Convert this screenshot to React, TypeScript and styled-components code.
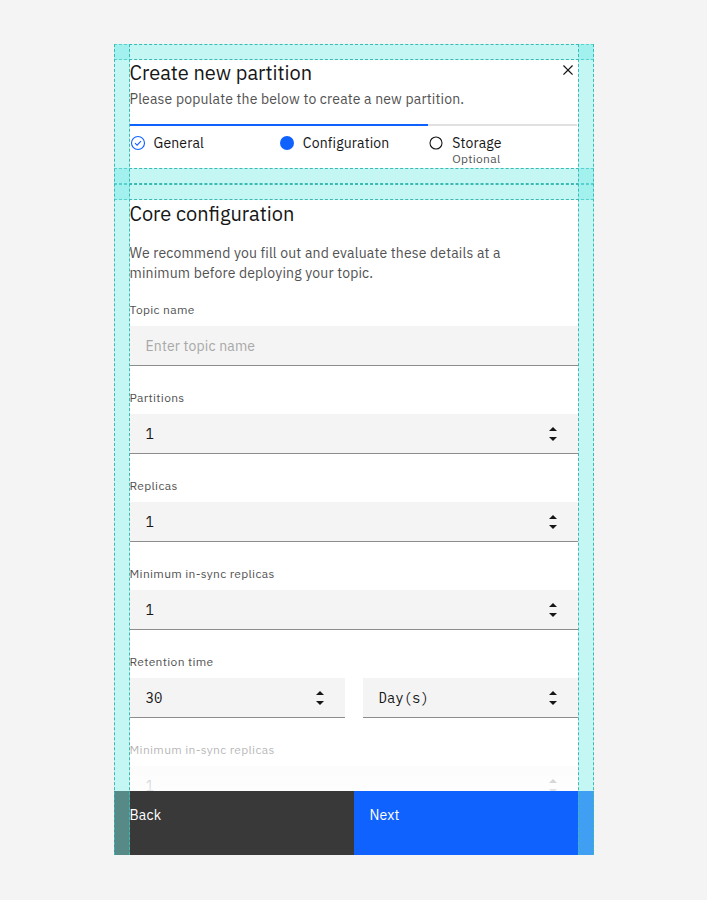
import React from 'react';
import styled, {createGlobalStyle} from "styled-components";

const GlobalStyle = createGlobalStyle`
  * {
    box-sizing: border-box;
  }
  body {
    margin: 0;
    background: #f4f4f4;
    font-family: "IBM Plex Sans", Roboto, "Noto Sans", sans-serif;
    color: #161616;
  }
`

const SpinIcon = () => (
    <svg width="8" height="14" viewBox="0 0 8 14">
        <path d="M0 4 L4 0 L8 4 Z" fill="#161616"/>
        <path d="M0 10 L8 10 L4 14 Z" fill="#161616"/>
    </svg>
)

const CloseIcon = () => (
    <svg width="20" height="20" viewBox="0 0 32 32">
        <path fill="#161616"
              d="M24 9.4L22.6 8 16 14.6 9.4 8 8 9.4 14.6 16 8 22.6 9.4 24 16 17.4 22.6 24 24 22.6 17.4 16 24 9.4z"/>
    </svg>
)

type StepState = "complete" | "current" | "incomplete";

const StepIcon: React.FC<{ state: StepState }> = ({state}) => {
    if (state === "complete") {
        return (
            <svg width="16" height="16" viewBox="0 0 16 16">
                <circle cx="8" cy="8" r="6.5" fill="none" stroke="#0f62fe" strokeWidth="1.1"/>
                <polyline points="5,8.2 7.1,10.2 11,6.2" fill="none" stroke="#0f62fe" strokeWidth="1.1"/>
            </svg>
        )
    }
    if (state === "current") {
        return (
            <svg width="16" height="16" viewBox="0 0 16 16">
                <circle cx="8" cy="8" r="7" fill="#0f62fe"/>
            </svg>
        )
    }
    return (
        <svg width="16" height="16" viewBox="0 0 16 16">
            <circle cx="8" cy="8" r="6" fill="none" stroke="#161616" strokeWidth="1.1"/>
        </svg>
    )
}

const steps: { label: string, state: StepState, optional?: boolean }[] = [
    {label: "General", state: "complete"},
    {label: "Configuration", state: "current"},
    {label: "Storage", state: "incomplete", optional: true},
]

const NumberField: React.FC<{ value: string }> = ({value}) => (
    <Field>
        <FieldInput readOnly defaultValue={value} $mono/>
        <SpinIcon/>
    </Field>
)

export default function App() {
    return (
        <Page>
            <GlobalStyle/>
            <Modal>
                <Header>
                    <HeaderTop>
                        <div>
                            <Title>Create new partition</Title>
                            <Subtitle>Please populate the below to create a new partition.</Subtitle>
                        </div>
                        <CloseButton aria-label="Close"><CloseIcon/></CloseButton>
                    </HeaderTop>
                    <Progress>
                        {steps.map(step => (
                            <Step key={step.label} $active={step.state !== "incomplete"}>
                                <StepIcon state={step.state}/>
                                <StepText>
                                    <StepLabel>{step.label}</StepLabel>
                                    {step.optional && <StepOptional>Optional</StepOptional>}
                                </StepText>
                            </Step>
                        ))}
                    </Progress>
                    <Band $at="top"/>
                    <Band $at="bottom"/>
                </Header>

                <Body>
                    <Heading>Core configuration</Heading>
                    <Description>
                        We recommend you fill out and evaluate these details at a minimum before deploying your topic.
                    </Description>

                    <FormItem>
                        <Label>Topic name</Label>
                        <Field>
                            <FieldInput placeholder="Enter topic name"/>
                        </Field>
                    </FormItem>
                    <FormItem>
                        <Label>Partitions</Label>
                        <NumberField value="1"/>
                    </FormItem>
                    <FormItem>
                        <Label>Replicas</Label>
                        <NumberField value="1"/>
                    </FormItem>
                    <FormItem>
                        <Label>Minimum in-sync replicas</Label>
                        <NumberField value="1"/>
                    </FormItem>
                    <FormItem>
                        <Label>Retention time</Label>
                        <SplitRow>
                            <NumberField value="30"/>
                            <NumberField value="Day(s)"/>
                        </SplitRow>
                    </FormItem>
                    <FormItem>
                        <Label>Minimum in-sync replicas</Label>
                        <NumberField value="1"/>
                    </FormItem>

                    <Fade/>
                    <Band $at="top"/>
                </Body>

                <Footer>
                    <FooterButton $kind="secondary">Back</FooterButton>
                    <FooterButton $kind="primary">Next</FooterButton>
                </Footer>

                <SideBand $side="left"/>
                <SideBand $side="right"/>
            </Modal>
        </Page>
    )
}

const Page = styled.div`
  min-height: 100vh;
  display: flex;
  align-items: flex-start;
  justify-content: center;
  padding: 44px 0;
`

const Modal = styled.div`
  position: relative;
  width: 480px;
  height: 811px;
  background: #fff;
  display: flex;
  flex-direction: column;
`

const Header = styled.header`
  position: relative;
  padding: 16px;
`

const HeaderTop = styled.div`
  display: flex;
  justify-content: space-between;
  align-items: flex-start;
`

const Title = styled.h2`
  margin: 0;
  font-size: 20px;
  line-height: 25px;
  font-weight: 400;
  color: #161616;
`

const Subtitle = styled.p`
  margin: 4px 0 0;
  font-size: 14px;
  line-height: 20px;
  color: #525252;
  letter-spacing: 0.16px;
`

const CloseButton = styled.button`
  width: 20px;
  height: 20px;
  padding: 0;
  border: 0;
  background: transparent;
  display: flex;
`

const Progress = styled.div`
  margin-top: 15px;
  display: grid;
  grid-template-columns: repeat(3, 1fr);
`

const Step = styled.div<{ $active: boolean }>`
  display: flex;
  gap: 8px;
  align-items: flex-start;
  padding-top: 9px;
  height: 44px;
  border-top: 2px solid ${p => p.$active ? "#0f62fe" : "#e0e0e0"};

  svg {
    flex-shrink: 0;
  }
`

const StepText = styled.div`
  display: flex;
  flex-direction: column;
  margin-top: -1px;
`

const StepLabel = styled.span`
  font-size: 14px;
  line-height: 18px;
  letter-spacing: 0.16px;
  color: #161616;
`

const StepOptional = styled.span`
  font-size: 12px;
  line-height: 14px;
  letter-spacing: 0.32px;
  color: #525252;
`

const Body = styled.main`
  position: relative;
  flex: 1;
  min-height: 0;
  overflow: hidden;
  padding: 16px 16px 0;
`

const Heading = styled.h3`
  margin: 0;
  font-size: 20px;
  line-height: 27px;
  font-weight: 400;
  color: #161616;
`

const Description = styled.p`
  margin: 16px 0 19px;
  max-width: 400px;
  font-size: 14px;
  line-height: 20px;
  letter-spacing: 0.16px;
  color: #525252;
`

const FormItem = styled.div`
  display: flex;
  flex-direction: column;
  gap: 8px;
  margin-bottom: 24px;
`

const Label = styled.label`
  font-size: 12px;
  line-height: 16px;
  letter-spacing: 0.32px;
  color: #525252;
`

const Field = styled.div`
  display: flex;
  align-items: center;
  min-width: 0;
  height: 40px;
  background: #f4f4f4;
  border-bottom: 1px solid #8d8d8d;
  padding-right: 21px;
`

const FieldInput = styled.input<{ $mono?: boolean }>`
  flex: 1;
  width: 0;
  min-width: 0;
  height: 100%;
  border: 0;
  outline: 0;
  background: transparent;
  padding: 0 16px;
  font-family: ${p => p.$mono ? `"IBM Plex Mono", "DejaVu Sans Mono", monospace` : `"IBM Plex Sans", Roboto, sans-serif`};
  font-size: 14px;
  letter-spacing: ${p => p.$mono ? "0" : "0.16px"};
  color: #161616;

  &::placeholder {
    color: #a8a8a8;
  }
`

const SplitRow = styled.div`
  display: grid;
  grid-template-columns: repeat(2, minmax(0, 1fr));
  gap: 18px;
`

const Fade = styled.div`
  position: absolute;
  left: 0;
  right: 0;
  bottom: 0;
  height: 68px;
  background: linear-gradient(to bottom,
  rgba(255, 255, 255, 0) 0%,
  rgba(255, 255, 255, 0.55) 35%,
  rgba(255, 255, 255, 0.8) 80%,
  rgba(255, 255, 255, 0.88) 100%);
  pointer-events: none;
`

const Footer = styled.footer`
  display: grid;
  grid-template-columns: 1fr 1fr;
  height: 64px;
`

const FooterButton = styled.button<{ $kind: "primary" | "secondary" }>`
  border: 0;
  margin: 0;
  text-align: left;
  display: flex;
  align-items: flex-start;
  padding: 15px 16px;
  font-family: "IBM Plex Sans", Roboto, sans-serif;
  font-size: 14px;
  line-height: 18px;
  letter-spacing: 0.16px;
  color: #fff;
  background: ${p => p.$kind === "primary" ? "#0f62fe" : "#393939"};
`

// padding outline overlay drawn over the modal
const bandColor = "rgba(125, 234, 230, 0.45)";
const bandLine = "1px dashed #3bbab4";

const Band = styled.div<{ $at: "top" | "bottom" }>`
  position: absolute;
  left: 0;
  right: 0;
  height: 16px;
  ${p => p.$at === "top" ? "top: 0;" : "bottom: 0;"}
  background: ${bandColor};
  border-top: ${bandLine};
  border-bottom: ${bandLine};
  pointer-events: none;
`

const SideBand = styled.div<{ $side: "left" | "right" }>`
  position: absolute;
  top: 0;
  bottom: 0;
  width: 16px;
  ${p => p.$side === "left" ? "left: 0;" : "right: 0;"}
  background: ${bandColor};
  border-left: ${bandLine};
  border-right: ${bandLine};
  pointer-events: none;
`
